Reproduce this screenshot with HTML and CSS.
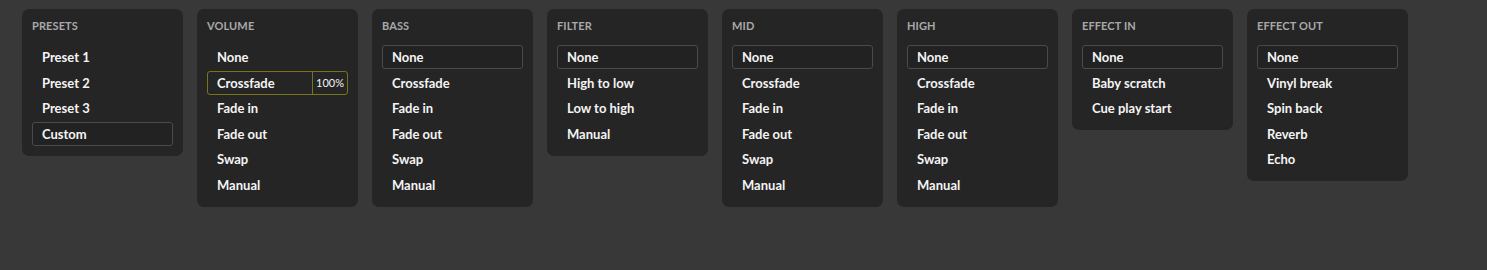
FILE: index.html
```html
<!DOCTYPE html>
<html lang="en">
<head>
<meta charset="UTF-8" />
<title>Transitions</title>
<link rel="stylesheet" href="styles.css">
</head>
<body>

<!-- ───── TRANSITION PANELS ───── -->
<div class="panels">

  <div class="panel">
    <div class="title">Presets</div>
    <div class="list">
      <div class="item">Preset 1</div>
      <div class="item">Preset 2</div>
      <div class="item">Preset 3</div>
      <div class="item selected">Custom</div>
    </div>
  </div>

  <div class="panel">
    <div class="title">Volume</div>
    <div class="list">
      <div class="item">None</div>
      <div class="item active">
        <span class="name">Crossfade</span>
        <span class="amount">100%</span>
      </div>
      <div class="item">Fade in</div>
      <div class="item">Fade out</div>
      <div class="item">Swap</div>
      <div class="item">Manual</div>
    </div>
  </div>

  <div class="panel">
    <div class="title">Bass</div>
    <div class="list">
      <div class="item selected">None</div>
      <div class="item">Crossfade</div>
      <div class="item">Fade in</div>
      <div class="item">Fade out</div>
      <div class="item">Swap</div>
      <div class="item">Manual</div>
    </div>
  </div>

  <div class="panel">
    <div class="title">Filter</div>
    <div class="list">
      <div class="item selected">None</div>
      <div class="item">High to low</div>
      <div class="item">Low to high</div>
      <div class="item">Manual</div>
    </div>
  </div>

  <div class="panel">
    <div class="title">Mid</div>
    <div class="list">
      <div class="item selected">None</div>
      <div class="item">Crossfade</div>
      <div class="item">Fade in</div>
      <div class="item">Fade out</div>
      <div class="item">Swap</div>
      <div class="item">Manual</div>
    </div>
  </div>

  <div class="panel">
    <div class="title">High</div>
    <div class="list">
      <div class="item selected">None</div>
      <div class="item">Crossfade</div>
      <div class="item">Fade in</div>
      <div class="item">Fade out</div>
      <div class="item">Swap</div>
      <div class="item">Manual</div>
    </div>
  </div>

  <div class="panel">
    <div class="title">Effect in</div>
    <div class="list">
      <div class="item selected">None</div>
      <div class="item">Baby scratch</div>
      <div class="item">Cue play start</div>
    </div>
  </div>

  <div class="panel">
    <div class="title">Effect out</div>
    <div class="list">
      <div class="item selected">None</div>
      <div class="item">Vinyl break</div>
      <div class="item">Spin back</div>
      <div class="item">Reverb</div>
      <div class="item">Echo</div>
    </div>
  </div>

</div>

</body>
</html>
```

FILE: styles.css
```css
/* ───── RESET ───── */
*{margin:0;padding:0;box-sizing:border-box}

/* ───── LAYOUT ───── */
body{
  background:#383838;color:#f2f2f2;
  font-family:"Lato","Liberation Sans",sans-serif;
}
.panels{display:flex;align-items:flex-start;gap:14px;padding:9px 0 0 22px}

/* panel card */
.panel{
  width:161px;background:#252525;border-radius:7px;
  padding:10px 10px 10px 10px
}
.title{
  font-size:11px;line-height:14px;font-weight:700;letter-spacing:.01em;
  text-transform:uppercase;color:#a9a9a9;padding-bottom:12px
}

/* option list */
.list{display:flex;flex-direction:column;gap:1.6px}
.item{
  height:24px;display:flex;align-items:center;
  padding:0 9px;border:1px solid transparent;border-radius:3px;
  font-size:13px;font-weight:700;color:#f4f4f4
}
.item.selected{background:#222;border-color:#4a4a4a}

/* active item with amount */
.item.active{border-color:#77741a;padding-right:0}
.item.active .name{flex:1}
.item.active .amount{
  width:35px;height:100%;display:flex;align-items:center;justify-content:center;
  border-left:1px solid #77741a;font-size:11px;font-weight:400
}
```
